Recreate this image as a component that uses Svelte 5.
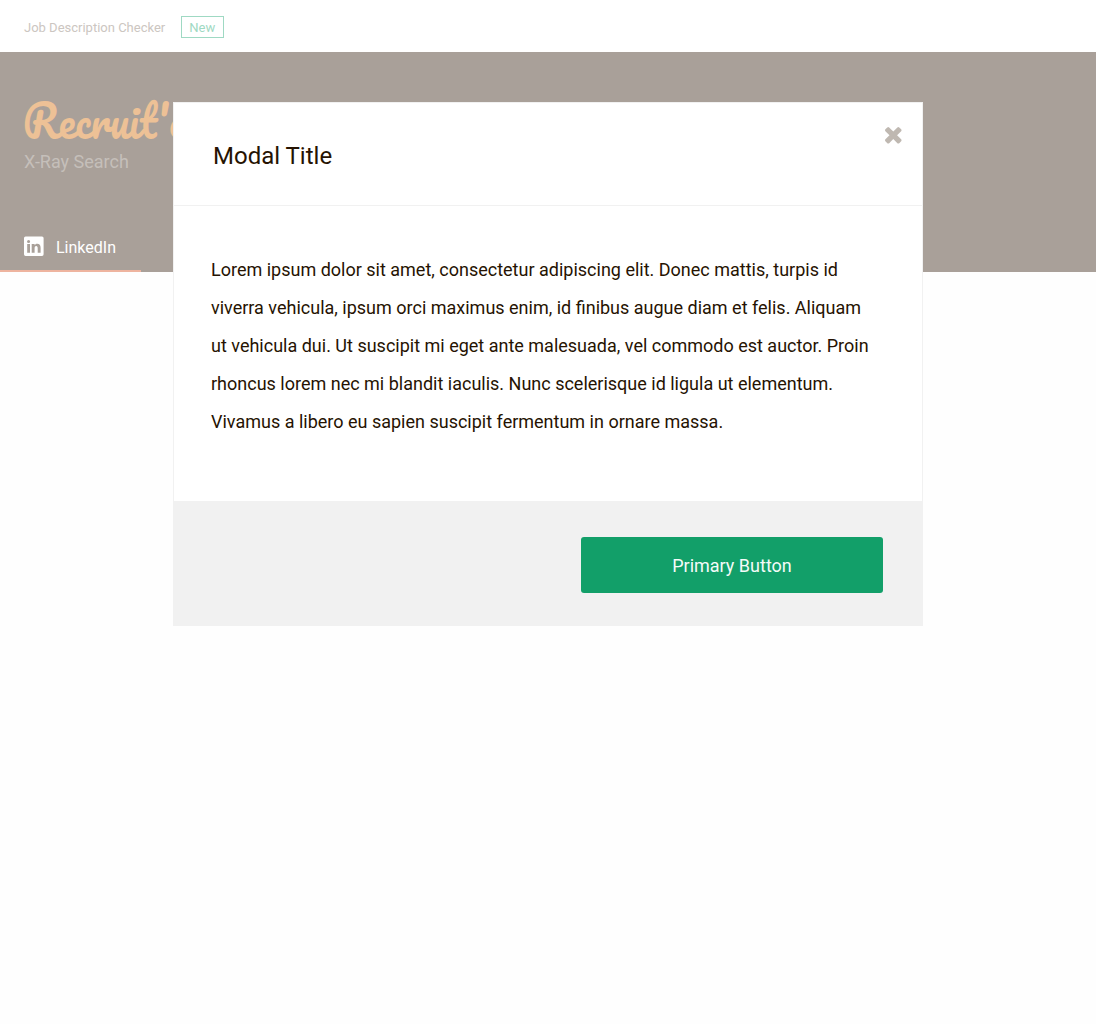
<script>
  const paragraph = [
    'Lorem ipsum dolor sit amet, consectetur adipiscing elit. Donec mattis, turpis id',
    'viverra vehicula, ipsum orci maximus enim, id finibus augue diam et felis. Aliquam',
    'ut vehicula dui. Ut suscipit mi eget ante malesuada, vel commodo est auctor. Proin',
    'rhoncus lorem nec mi blandit iaculis. Nunc scelerisque id ligula ut elementum.',
    'Vivamus a libero eu sapien suscipit fermentum in ornare massa.'
  ];
</script>

<div class="page">
  <nav class="topbar">
    <span class="link">Job Description Checker</span>
    <span class="badge">New</span>
  </nav>
  <header class="hero">
    <div class="brand">Recruit'em</div>
    <div class="tagline">X-Ray Search</div>
    <div class="tab">
      <svg width="20" height="20" viewBox="0 0 20 20" aria-hidden="true">
        <path fill="#fff" fill-rule="evenodd" d="M1.600 0.500h16.400A1.600 1.600 0 0 1 19.600 2.100v16.200a1.600 1.600 0 0 1-1.600 1.600H1.600A1.600 1.600 0 0 1 0 18.300V2.100A1.600 1.600 0 0 1 1.600 0.500zM3.200 8v8.700H6V8zM4.600 3.900a1.550 1.550 0 1 0 0 3.100 1.550 1.550 0 0 0 0-3.100zM7.700 8v8.700h2.900v-4.500c0-1.300.5-2.100 1.600-2.100s1.500 1 1.500 2.200v4.400h2.900v-4.800c0-2.600-1.200-4.100-3.300-4.100-1.400 0-2.200.7-2.700 1.500V8z" />
      </svg>
      <span>LinkedIn</span>
    </div>
  </header>

  <section class="modal" role="dialog" aria-label="Modal Title">
    <div class="head">
      <h1>Modal Title</h1>
      <button class="close" aria-label="Close">
        <svg width="17" height="17" viewBox="302 366 1220 1220" aria-hidden="true">
          <path fill="#bfb8b1" d="M1490 1322q0 40-28 68l-136 136q-28 28-68 28t-68-28l-294-294-294 294q-28 28-68 28t-68-28l-136-136q-28-28-28-68t28-68l294-294-294-294q-28-28-28-68t28-68l136-136q28-28 68-28t68 28l294 294 294-294q28-28 68-28t68 28l136 136q28 28 28 68t-28 68l-294 294 294 294q28 28 28 68z" />
        </svg>
      </button>
    </div>
    <p class="body">
      {#each paragraph as line}<span>{line}</span>{/each}
    </p>
    <div class="foot"><button class="primary">Primary Button</button></div>
  </section>
</div>

<style>
  :global(body) { background: #fefefe; }
  .page { position: relative; height: 1024px; overflow: hidden; background: #fefefe; font-family: Roboto, sans-serif; }
  .topbar { display: flex; align-items: center; gap: 16px; height: 52px; padding: 2px 24px 0; box-sizing: border-box; background: #fff; font-size: 13px; }
  .link { color: #ccc6c1; }
  .badge { height: 22px; width: 43px; box-sizing: border-box; border: 1px solid #9fd9c3; color: #9fd9c3; line-height: 21px; padding-left: 7px; }
  .hero { display: flex; flex-direction: column; height: 220px; box-sizing: border-box; padding: 40px 24px 0; background: #a9a099; }
  .brand { height: 58px; margin-left: -1.5px; color: #edc196; font: 400 42px/56px Pacifico, Lobster, cursive; transform: scaleY(1.07); white-space: nowrap; }
  .tagline { height: 24px; line-height: 24px; font-size: 18px; color: #c5bfba; }
  .tab { display: flex; align-items: center; gap: 12px; width: 117px; height: 48px; margin: auto 0 0 -24px; padding-left: 24px; border-bottom: 2px solid #eeb49f; color: #fff; font-size: 16px; }
  .tab span { padding-top: 2px; }
  .modal { position: absolute; left: 173px; top: 102px; width: 750px; height: 524px; box-sizing: border-box; border: 1px solid #f1f1f1; background: #fff; color: #261302; display: flex; flex-direction: column; }
  .head { display: flex; justify-content: space-between; height: 103px; box-sizing: border-box; flex: none; border-bottom: 1px solid #f1f1f1; }
  h1 { margin: 0 0 0 39px; font-size: 24px; font-weight: 400; line-height: 106px; }
  .close { display: flex; width: 17px; height: 17px; margin: 24px 20px 0 0; padding: 0; border: 0; background: none; }
  .body { margin: 0; padding: 45px 37px 0; flex: 1; font-size: 18px; line-height: 38px; white-space: nowrap; }
  .body span { display: block; }
  .foot { display: flex; justify-content: flex-end; align-items: flex-start; height: 124px; box-sizing: border-box; padding: 36px 39px 0; background: #f1f1f1; }
  .primary { width: 302px; height: 56px; padding: 0; border: 0; border-radius: 3px; background: #129f69; color: #f4fbf8; font: 400 18px Roboto, sans-serif; }
</style>
